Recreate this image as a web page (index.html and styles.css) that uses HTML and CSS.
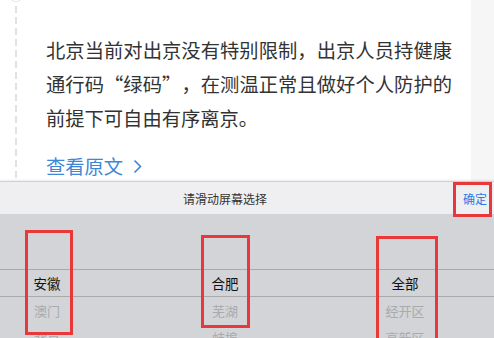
FILE: index.html
```html
<!DOCTYPE html>
<html lang="zh">
<head>
<meta charset="utf-8">
<link rel="stylesheet" href="styles.css">
</head>
<body>
<div class="page">
  <section class="article">
    <div class="card">
      <div class="rail">
        <span class="dot"></span>
        <span class="dash"></span>
      </div>
      <div class="content">
        <p class="text">北京当前对出京没有特别限制，出京人员持健康通行码<span class="q q-open">“</span>绿码<span class="q q-close">”</span>，在测温正常且做好个人防护的前提下可自由有序离京。</p>
        <a class="more">查看原文<svg class="chev" width="9" height="15" viewBox="0 0 9 15"><polyline points="1.5,1.5 7.5,7.5 1.5,13.5" fill="none" stroke="#3c87d8" stroke-width="1.6"/></svg></a>
      </div>
    </div>
    <div class="side"></div>
  </section>
  <section class="picker">
    <header class="picker-head">
      <span class="title">请滑动屏幕选择</span>
      <span class="ok">确定</span>
    </header>
    <div class="picker-body">
      <div class="line line-top"></div>
      <div class="line line-bottom"></div>
      <div class="cols">
        <ul class="col">
          <li class="sel">安徽</li>
          <li>澳门</li>
          <li>北京</li>
        </ul>
        <ul class="col">
          <li class="sel">合肥</li>
          <li>芜湖</li>
          <li>蚌埠</li>
        </ul>
        <ul class="col">
          <li class="sel">全部</li>
          <li>经开区</li>
          <li>高新区</li>
        </ul>
      </div>
    </div>
  </section>
  <div class="mark mark-ok"></div>
  <div class="mark mark-c1"></div>
  <div class="mark mark-c2"></div>
  <div class="mark mark-c3"></div>
</div>
</body>
</html>
```
FILE: styles.css
```css
* { box-sizing: border-box; }
html, body {
  margin: 0;
  padding: 0;
  width: 494px;
  height: 338px;
  overflow: hidden;
  background: #fff;
  font-family: "Noto Sans CJK SC", "Noto Sans", sans-serif;
}
.page {
  position: relative;
  width: 494px;
  height: 338px;
}
.article {
  display: flex;
  height: 181px;
}
.card {
  width: 471px;
  background: #fff;
  display: flex;
}
.side {
  flex: 1;
  background: #f6f6f7;
}
.rail {
  width: 46px;
  position: relative;
}
.dot {
  position: absolute;
  left: 7px;
  top: -16px;
  width: 18px;
  height: 18px;
  border-radius: 50%;
  border: 1px solid #e6e6e6;
}
.dash {
  position: absolute;
  left: 15px;
  top: 6px;
  bottom: 0;
  width: 2px;
  background: repeating-linear-gradient(to bottom, #e2e2e2 0 7px, transparent 7px 11px);
}
.content {
  width: 406px;
  padding-top: 33px;
}
.text {
  margin: 0;
  font-size: 19.3px;
  line-height: 34px;
  color: #333;
  text-align: justify;
}
.q {
  display: inline-block;
  width: 1em;
}
.q-open { text-align: right; }
.q-close { text-align: left; }
.more {
  display: flex;
  align-items: center;
  margin-top: 14px;
  height: 34px;
  font-size: 19.3px;
  color: #3c87d8;
}
.chev {
  margin-left: 10px;
  margin-top: 1px;
}
.picker {
  height: 157px;
  display: flex;
  flex-direction: column;
}
.picker-head {
  height: 33px;
  display: flex;
  align-items: center;
  background: #efeff2;
  border-top: 1px solid #cfcfd2;
  box-shadow: 0 -1px 2px rgba(0,0,0,0.08);
}
.title {
  flex: 1;
  text-align: center;
  font-size: 12px;
  color: #333;
}
.ok {
  width: 44px;
  padding-left: 13px;
  font-size: 12px;
  color: #2a7ae2;
}
.picker-body {
  flex: 1;
  position: relative;
  background: #d2d4d7;
  overflow: hidden;
}
.line {
  position: absolute;
  left: 0;
  right: 0;
  height: 1px;
  background: #a9aaac;
}
.line-top { top: 55px; }
.line-bottom { top: 82px; }
.cols {
  display: grid;
  grid-template-columns: 94px 262px 98px;
}
.col {
  list-style: none;
  margin: 0;
  padding: 56px 0 0;
}
.col li {
  height: 27px;
  line-height: 27px;
  text-align: center;
  font-size: 13px;
  color: #a9aaad;
}
.col li.sel {
  font-size: 13.5px;
  color: #111;
}
.mark {
  position: absolute;
  border: 3px solid #e8383a;
}
.mark-ok { left: 453px; top: 182px; width: 39px; height: 35px; }
.mark-c1 { left: 25px; top: 230px; width: 48px; height: 105px; }
.mark-c2 { left: 201px; top: 235px; width: 49px; height: 93px; }
.mark-c3 { left: 376px; top: 236px; width: 62px; height: 112px; }
```
